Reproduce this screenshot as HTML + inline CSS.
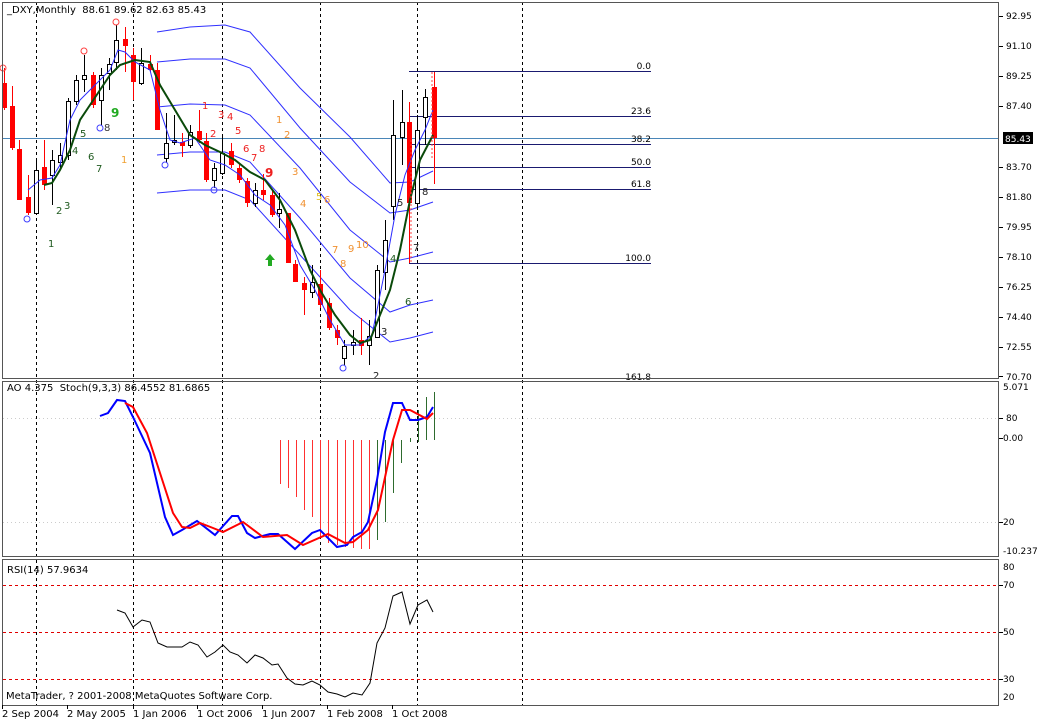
<!DOCTYPE html>
<html><head><meta charset="utf-8"><style>
html,body{margin:0;padding:0;background:#fff;width:1040px;height:720px;overflow:hidden}
svg{display:block;font-family:Tahoma,"DejaVu Sans","Liberation Sans",sans-serif}
</style></head><body>
<svg id="s" width="1040" height="720" viewBox="0 0 1040 720" xmlns="http://www.w3.org/2000/svg">
<rect width="1040" height="720" fill="#fff"/>
<g id="grid" stroke="#000" stroke-dasharray="3,3" stroke-width="1">
<line x1="36.5" y1="2" x2="36.5" y2="705"/><line x1="133.5" y1="2" x2="133.5" y2="705"/>
<line x1="222.5" y1="2" x2="222.5" y2="705"/><line x1="320.5" y1="2" x2="320.5" y2="705"/>
<line x1="417.5" y1="2" x2="417.5" y2="705"/><line x1="522.5" y1="2" x2="522.5" y2="705"/>
</g>
<line x1="2" y1="138.5" x2="999" y2="138.5" stroke="#4a86b8"/>
<g stroke="#1a1a70" stroke-width="1">
<line x1="409" y1="71.5" x2="651" y2="71.5"/><line x1="409" y1="116.5" x2="651" y2="116.5"/>
<line x1="409" y1="144.5" x2="651" y2="144.5"/><line x1="409" y1="167.5" x2="651" y2="167.5"/>
<line x1="409" y1="189.5" x2="651" y2="189.5"/><line x1="409" y1="263.5" x2="651" y2="263.5"/>
</g>
<g font-size="9" fill="#000" text-anchor="end">
<text x="651" y="69">0.0</text><text x="651" y="114">23.6</text><text x="651" y="142">38.2</text>
<text x="651" y="165">50.0</text><text x="651" y="187">61.8</text><text x="651" y="261">100.0</text><text x="651" y="380">161.8</text>
</g>
<g id="env" fill="none" stroke="#3030ff" stroke-width="1"></g>
<g id="cand"></g>
<g fill="none">
<polyline id="ma" stroke="#2a2aff" stroke-width="1"/>
<polyline id="gr" stroke="#0a4a0a" stroke-width="2"/>
</g>
<g stroke="#ff4040" stroke-dasharray="2,2"><line x1="411" y1="140" x2="411" y2="262"/><line x1="432" y1="72" x2="432" y2="160"/></g>
<g font-size="10">
<g fill="#1f5a1f"><text x="48" y="247">1</text><text x="56" y="214">2</text><text x="64" y="209">3</text><text x="72" y="154">4</text><text x="80" y="137">5</text><text x="88" y="160">6</text><text x="96" y="172">7</text></g>
<text x="104" y="131" fill="#333">8</text>
<text x="111" y="117" fill="#22aa22" font-weight="bold" font-size="12">9</text>
<text x="121" y="163" fill="#f0a030">1</text>
<g fill="#ee2020"><text x="202" y="109">1</text><text x="210" y="137">2</text><text x="218" y="118">3</text><text x="227" y="120">4</text><text x="235" y="134">5</text><text x="243" y="152">6</text><text x="251" y="161">7</text><text x="259" y="152">8</text></g>
<text x="265" y="177" fill="#ee2020" font-weight="bold" font-size="12">9</text>
<g fill="#f09030"><text x="276" y="123">1</text><text x="284" y="138">2</text><text x="292" y="175">3</text><text x="300" y="207">4</text><text x="324" y="203">6</text><text x="332" y="253">7</text><text x="340" y="267">8</text><text x="348" y="252">9</text><text x="356" y="248">10</text></g>
<text x="316" y="200" fill="#e0c020">5</text>
<g fill="#222"><text x="373" y="379">2</text><text x="381" y="335">3</text><text x="397" y="206">5</text><text x="422" y="195">8</text><text x="413" y="251">7</text></g>
<text x="390" y="262" fill="#1f5a1f">4</text><text x="405" y="305" fill="#1f5a1f">6</text>
</g>
<g fill="none" stroke-width="1">
<circle cx="27" cy="219" r="3" stroke="#4040ff"/><circle cx="100" cy="128" r="3" stroke="#4040ff"/><circle cx="165" cy="165" r="3" stroke="#4040ff"/><circle cx="214" cy="190" r="3" stroke="#4040ff"/><circle cx="343" cy="368" r="3" stroke="#4040ff"/>
<circle cx="3" cy="68" r="3" stroke="#ff4040"/><circle cx="84" cy="51" r="3" stroke="#ff4040"/><circle cx="116" cy="22" r="3" stroke="#ff4040"/>
</g>
<path d="M270 254 L265 260 L268 260 L268 266 L272 266 L272 260 L275 260 Z" fill="#22aa22"/>
<text x="7" y="13" font-size="10" fill="#000">_DXY,Monthly&#160;&#160;88.61 89.62 82.63 85.43</text>

<!-- AO panel -->
<g stroke="#ccc" stroke-dasharray="1,3"><line x1="3" y1="418.5" x2="999" y2="418.5"/><line x1="3" y1="522.5" x2="999" y2="522.5"/></g>
<g id="ao"></g>
<polyline id="sb" fill="none" stroke="#0000ff" stroke-width="2"/>
<polyline id="sr" fill="none" stroke="#ff0000" stroke-width="2"/>
<text x="7" y="391" font-size="10">AO 4.375&#160;&#160;Stoch(9,3,3) 86.4552 81.6865</text>

<!-- RSI -->
<g stroke="#e00000" stroke-dasharray="3,3"><line x1="3" y1="585.5" x2="999" y2="585.5"/><line x1="3" y1="632.5" x2="999" y2="632.5"/><line x1="3" y1="679.5" x2="999" y2="679.5"/></g>
<polyline id="rsi" fill="none" stroke="#000" stroke-width="1"/>
<text x="7" y="573" font-size="10">RSI(14) 57.9634</text>
<text x="6" y="699" font-size="10">MetaTrader, ? 2001-2008 MetaQuotes Software Corp.</text>

<!-- frames -->
<g fill="none" stroke="#555" stroke-width="1">
<rect x="2.5" y="2.5" width="996" height="376"/>
<rect x="2.5" y="381.5" width="996" height="175"/>
<rect x="2.5" y="559.5" width="996" height="146"/>
</g>
<g font-size="9" fill="#000" id="axis">
<text x="1006" y="19">92.95</text><text x="1006" y="49">91.10</text><text x="1006" y="79">89.25</text><text x="1006" y="109">87.40</text>
<text x="1006" y="170">83.70</text><text x="1006" y="200">81.80</text><text x="1006" y="230">79.95</text><text x="1006" y="260">78.10</text>
<text x="1006" y="290">76.25</text><text x="1006" y="320">74.40</text><text x="1006" y="350">72.55</text><text x="1006" y="380">70.70</text>
<text x="1003" y="390">5.071</text><text x="1006" y="421">80</text><text x="1003" y="441">0.00</text><text x="1003" y="525">20</text><text x="1003" y="554">-10.237</text>
<text x="1003" y="570">80</text><text x="1003" y="588">70</text><text x="1003" y="635">50</text><text x="1003" y="682">30</text><text x="1003" y="700">20</text>
</g>
<rect x="1003" y="132" width="30" height="12" fill="#000"/>
<text x="1005" y="142" font-size="9" fill="#fff">85.43</text>
<g font-size="10" fill="#000">
<text x="2" y="717">2 Sep 2004</text><text x="67" y="717">2 May 2005</text><text x="133" y="717">1 Jan 2006</text><text x="197" y="717">1 Oct 2006</text>
<text x="262" y="717">1 Jun 2007</text><text x="327" y="717">1 Feb 2008</text><text x="392" y="717">1 Oct 2008</text>
</g>
<g id="ticks" stroke="#000"></g>
</svg>
<script>
var NS="http://www.w3.org/2000/svg";
function el(p,t,a){var e=document.createElementNS(NS,t);for(var k in a)e.setAttribute(k,a[k]);p.appendChild(e);return e;}
var C=[[4,'r',83,108,68,110],[12,'r',106,148,86,150],[19,'r',149,200,140,200],[28,'r',197,213,175,215],[36,'w',170,213,160,215],[44,'r',167,185,140,190],[52,'w',160,175,150,205],[60,'w',155,162,143,170],[68,'w',101,155,98,160],[76,'w',80,101,75,105],[84,'w',75,79,55,92],[93,'r',75,105,72,108],[101,'w',75,100,68,125],[109,'w',64,73,58,90],[116,'w',40,62,25,70],[125,'r',39,46,27,72],[133,'r',55,82,48,100],[141,'w',63,83,48,85],[150,'r',64,70,55,72],[157,'r',70,130,63,130],[166,'w',143,158,113,163],[174,'w',140,142,115,145],[182,'r',142,146,133,157],[190,'w',132,145,125,148],[199,'r',131,140,110,143],[206,'r',141,180,133,182],[214,'w',168,180,163,188],[222,'w',153,173,137,175],[231,'r',151,165,143,168],[239,'r',168,180,163,183],[247,'r',181,203,178,207],[255,'w',190,203,183,207],[263,'r',190,195,174,200],[272,'r',195,215,190,217],[279,'w',209,213,193,228],[288,'r',213,263,213,263],[295,'r',264,282,260,282],[304,'r',283,290,277,315],[312,'w',282,292,265,298],[320,'r',284,305,270,308],[329,'r',303,328,298,330],[337,'r',330,338,325,345],[344,'w',346,358,340,365],[353,'w',342,345,330,355],[361,'r',340,346,318,355],[369,'w',336,345,320,365],[377,'w',270,337,265,337],[385,'w',240,272,220,290],[393,'w',135,206,100,220],[402,'w',122,137,90,165],[409,'r',122,203,102,263],[417,'w',130,203,115,210],[425,'w',97,117,89,145],[434,'r',87,138,72,184]];
var g=document.getElementById('cand');
C.forEach(function(c){var x=c[0],red=c[1]=='r';
el(g,'line',{x1:x+.5,x2:x+.5,y1:c[4],y2:c[5],stroke:red?'#ff0000':'#000'});
if(red)el(g,'rect',{x:x-2,y:c[2],width:5,height:Math.max(2,c[3]-c[2]),fill:'#ff0000'});
else el(g,'rect',{x:x-1.5,y:c[2]+.5,width:4,height:Math.max(1,c[3]-c[2]),fill:'#fff',stroke:'#000'});});
function pl(pts){return pts.map(function(p){return p.join(',')}).join(' ');}
var xs=[157,190,225,250,300,350,390,410,433];
var E=[[32,27,25,32,88,137,183,182,171],[62,59,59,68,128,182,213,210,202],[107,104,105,115,168,230,262,258,252],[155,152,152,162,218,278,312,305,300],[193,190,190,200,255,310,342,338,332]];
var eg=document.getElementById('env');
E.forEach(function(r){var s='';for(var i=0;i<xs.length;i++)s+=xs[i]+','+r[i]+' ';el(eg,'polyline',{points:s});});
var G=[[44,185],[52,183],[60,170],[70,150],[80,120],[90,105],[100,90],[110,75],[120,65],[135,60],[150,62],[160,85],[175,110],[190,135],[205,145],[220,152],[235,160],[250,172],[265,180],[280,200],[295,230],[310,270],[320,290],[335,315],[350,335],[360,343],[370,340],[380,315],[390,290],[400,250],[410,200],[420,160],[433,135]];
document.getElementById('gr').setAttribute('points',pl(G));
var M=[[28,190],[40,180],[52,178],[60,165],[70,120],[80,100],[90,90],[100,80],[110,70],[118,50],[125,52],[135,62],[150,70],[160,110],[170,140],[180,143],[195,138],[210,160],[225,165],[240,175],[255,195],[270,205],[285,225],[300,265],[315,290],[330,320],[345,345],[360,345],[372,335],[385,270],[395,215],[405,175],[415,150],[425,130],[433,110]];
document.getElementById('ma').setAttribute('points',pl(M));
document.getElementById('sb').setAttribute('points',pl([[100,416],[108,413],[117,400],[125,401],[133,417],[150,453],[165,517],[173,535],[182,530],[197,521],[215,535],[232,516],[238,516],[247,533],[255,538],[270,534],[278,534],[295,549],[312,533],[320,530],[337,547],[347,545],[353,537],[362,532],[368,522],[377,480],[385,432],[393,403],[402,403],[410,420],[418,420],[427,417],[433,407]]));
document.getElementById('sr').setAttribute('points',pl([[125,403],[133,407],[147,433],[160,473],[173,513],[182,527],[190,528],[200,523],[213,528],[223,532],[243,522],[263,537],[287,535],[303,545],[328,534],[345,543],[353,542],[368,530],[378,510],[393,440],[402,410],[410,410],[427,419],[433,413]]));
var ao=document.getElementById('ao');
[[280,484],[288,488],[296,497],[304,510],[312,517],[320,538],[328,543],[337,545],[345,547],[353,548],[361,549],[369,549]].forEach(function(b){el(ao,'line',{x1:b[0]+.5,x2:b[0]+.5,y1:440,y2:b[1],stroke:'#ff3030'});});
[[377,440,540],[385,440,522],[393,440,493],[401,440,463],[410,438,442],[418,410,442],[426,397,440],[434,392,440]].forEach(function(b){el(ao,'line',{x1:b[0]+.5,x2:b[0]+.5,y1:b[1],y2:b[2],stroke:'#2e6b2e'});});
document.getElementById('rsi').setAttribute('points',pl([[117,610],[125,613],[133,627],[142,620],[150,622],[158,643],[167,647],[182,647],[190,642],[198,645],[207,657],[215,652],[223,645],[230,652],[238,655],[247,663],[255,655],[263,658],[272,665],[278,664],[287,678],[295,684],[303,685],[312,681],[320,685],[328,692],[337,694],[345,697],[353,693],[362,695],[370,683],[377,643],[385,628],[393,596],[402,592],[410,624],[418,605],[427,600],[433,612]]));
var tk=document.getElementById('ticks');
[16,46,76,106,167,197,227,257,287,317,347,376,418,438,522,585,632,679].forEach(function(y){el(tk,'line',{x1:999,x2:1003,y1:y+.5,y2:y+.5});});
[2,67,133,197,262,327,392].forEach(function(x){el(tk,'line',{x1:x+.5,x2:x+.5,y1:705,y2:709});});
</script>
</body></html>
